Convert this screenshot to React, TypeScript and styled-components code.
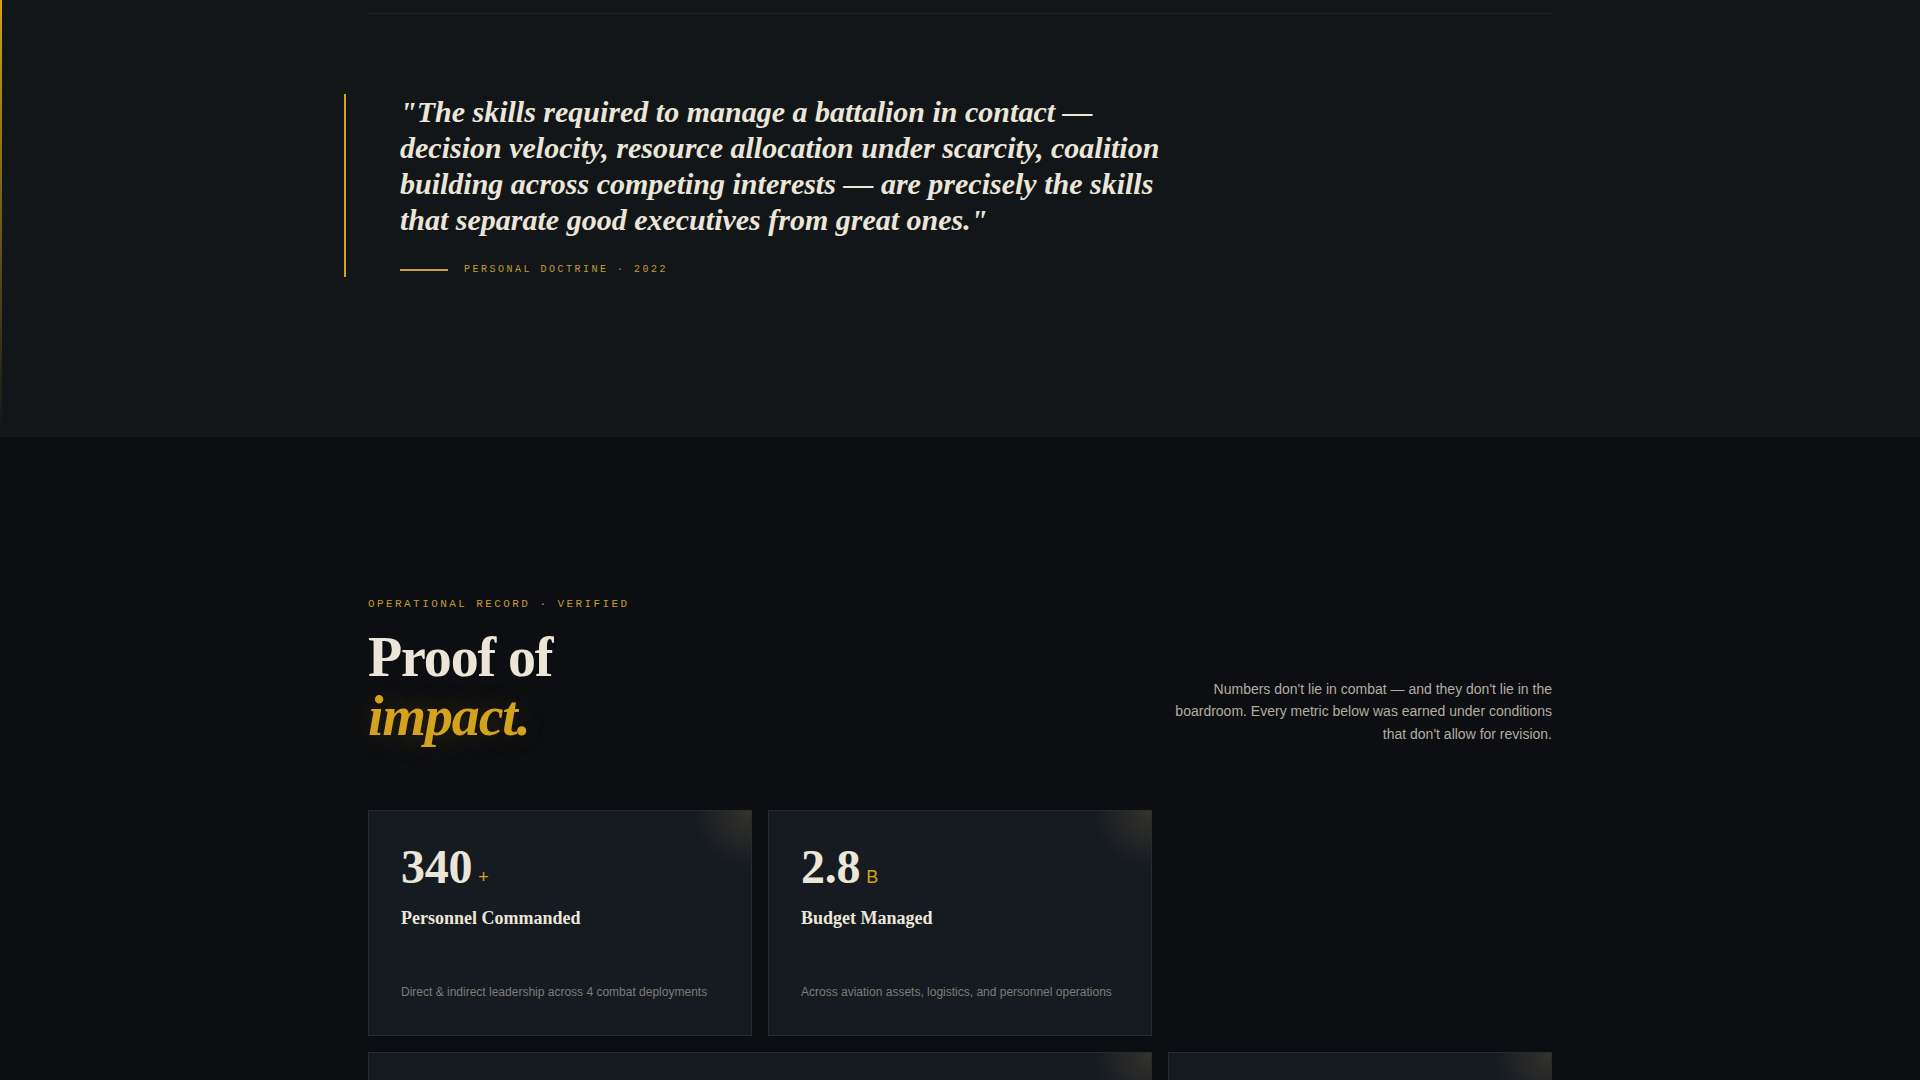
import styled, { createGlobalStyle } from 'styled-components';

const GlobalStyle = createGlobalStyle`
  * { box-sizing: border-box; }
  body {
    margin: 0;
    background: #0c0e11;
    font-family: 'Liberation Sans', Arial, sans-serif;
    -webkit-font-smoothing: antialiased;
  }
`;

const gold = '#d4a21c';
const cream = '#ece6d9';

const Container = styled.div`
  max-width: 1280px;
  margin: 0 auto;
  padding: 0 48px;
`;

const DoctrineSection = styled.section`
  position: relative;
  background: #121619;
  padding: 13px 0 160px;

  /* gold accent running down the left edge */
  &::before {
    content: '';
    position: absolute;
    left: 0;
    top: 0;
    width: 2px;
    height: 430px;
    background: linear-gradient(to bottom, ${gold} 0%, rgba(212, 162, 28, 0.55) 45%, rgba(212, 162, 28, 0) 100%);
  }
`;

const Divider = styled.div`
  height: 1px;
  background: rgba(255, 255, 255, 0.06);
`;

const Quote = styled.blockquote`
  margin: 80px 0 0 -24px;
  padding-left: 54px;
  border-left: 2px solid ${gold};
`;

const QuoteText = styled.p`
  margin: 0;
  max-width: 790px;
  font-family: 'Liberation Serif', 'Times New Roman', serif;
  font-style: italic;
  font-weight: 700;
  font-size: 30px;
  line-height: 36px;
  color: ${cream};
`;

const Attribution = styled.div`
  display: flex;
  align-items: center;
  gap: 16px;
  margin-top: 24px;
  height: 15px;
`;

const AttributionRule = styled.span`
  width: 48px;
  height: 2px;
  background: #c9a040;
`;

const MonoLabel = styled.span<{ $size?: number; $spacing?: string }>`
  font-family: 'Liberation Mono', 'Courier New', monospace;
  font-size: ${({ $size }) => $size ?? 10}px;
  letter-spacing: ${({ $spacing }) => $spacing ?? '0.25em'};
  text-transform: uppercase;
  color: #c49b35;
`;

const ImpactSection = styled.section`
  background: #0c0e11;
  padding: 160px 0 120px;
`;

const Header = styled.div`
  display: flex;
  justify-content: space-between;
  align-items: flex-end;
  margin-bottom: 64px;
`;

const Eyebrow = styled(MonoLabel)`
  display: block;
  line-height: 14px;
  margin-bottom: 17px;
`;

const Title = styled.h2`
  margin: 0;
  font-family: 'Liberation Serif', 'Times New Roman', serif;
  font-weight: 700;
  font-size: 56px;
  line-height: 1.05;
  letter-spacing: -0.02em;
  color: ${cream};

  em {
    display: block;
    color: ${gold};
    text-shadow: 0 0 32px rgba(212, 162, 28, 0.22);
  }
`;

const Lede = styled.p`
  margin: 0;
  max-width: 380px;
  text-align: right;
  font-size: 14px;
  line-height: 1.62;
  color: #b3ada2;
`;

const Grid = styled.div`
  display: grid;
  grid-template-columns: repeat(3, 1fr);
  gap: 16px;
`;

const Card = styled.article<{ $span?: number }>`
  position: relative;
  overflow: hidden;
  grid-column: span ${({ $span }) => $span ?? 1};
  min-height: 226px;
  padding: 32px 32px 34px;
  display: flex;
  flex-direction: column;
  background: #161b22;
  border: 1px solid rgba(255, 255, 255, 0.07);

  /* faint warm light in the top-right corner */
  &::after {
    content: '';
    position: absolute;
    top: 0;
    right: 0;
    width: 56px;
    height: 56px;
    background: radial-gradient(circle at top right, rgba(212, 176, 90, 0.16), rgba(212, 176, 90, 0) 72%);
    pointer-events: none;
  }
`;

const Figure = styled.div`
  display: flex;
  align-items: baseline;
  gap: 6px;
`;

const Value = styled.span`
  font-family: 'Liberation Serif', 'Times New Roman', serif;
  font-weight: 700;
  font-size: 48px;
  line-height: 1;
  letter-spacing: -0.005em;
  color: ${cream};
`;

const Unit = styled.span`
  font-size: 18px;
  color: ${gold};
`;

const CardTitle = styled.h3`
  margin: 16px 0 0;
  font-family: 'Liberation Serif', 'Times New Roman', serif;
  font-weight: 700;
  font-size: 18px;
  line-height: 1.3;
  color: ${cream};
`;

const CardNote = styled.p`
  margin: auto 0 0;
  font-size: 12px;
  line-height: 1.5;
  color: #7f7c76;
`;

type Metric = { value: string; unit: string; title: string; note: string; span?: number };

const metrics: Metric[] = [
  { value: '340', unit: '+', title: 'Personnel Commanded', note: 'Direct & indirect leadership across 4 combat deployments' },
  { value: '2.8', unit: 'B', title: 'Budget Managed', note: 'Across aviation assets, logistics, and personnel operations' },
  { value: '100', unit: '%', title: 'Mission Readiness', note: 'Sustained fleet availability through three consecutive inspection cycles', span: 2 },
  { value: '22', unit: 'yrs', title: 'Years of Service', note: 'Active duty, from platoon leader to battalion command' },
];

export default function App() {
  return (
    <>
      <GlobalStyle />
      <DoctrineSection>
        <Container>
          <Divider />
          <Quote>
            <QuoteText>
              "The skills required to manage a battalion in contact — decision velocity, resource allocation under
              scarcity, coalition building across competing interests — are precisely the skills that separate good
              executives from great ones."
            </QuoteText>
            <Attribution>
              <AttributionRule />
              <MonoLabel>Personal Doctrine · 2022</MonoLabel>
            </Attribution>
          </Quote>
        </Container>
      </DoctrineSection>

      <ImpactSection>
        <Container>
          <Header>
            <div>
              <Eyebrow $size={11} $spacing="0.22em">Operational Record · Verified</Eyebrow>
              <Title>
                Proof of
                <em>impact.</em>
              </Title>
            </div>
            <Lede>
              Numbers don't lie in combat — and they don't lie in the boardroom. Every metric below was earned under
              conditions that don't allow for revision.
            </Lede>
          </Header>
          <Grid>
            {metrics.map((m) => (
              <Card key={m.title} $span={m.span}>
                <Figure>
                  <Value>{m.value}</Value>
                  <Unit>{m.unit}</Unit>
                </Figure>
                <CardTitle>{m.title}</CardTitle>
                <CardNote>{m.note}</CardNote>
              </Card>
            ))}
          </Grid>
        </Container>
      </ImpactSection>
    </>
  );
}
